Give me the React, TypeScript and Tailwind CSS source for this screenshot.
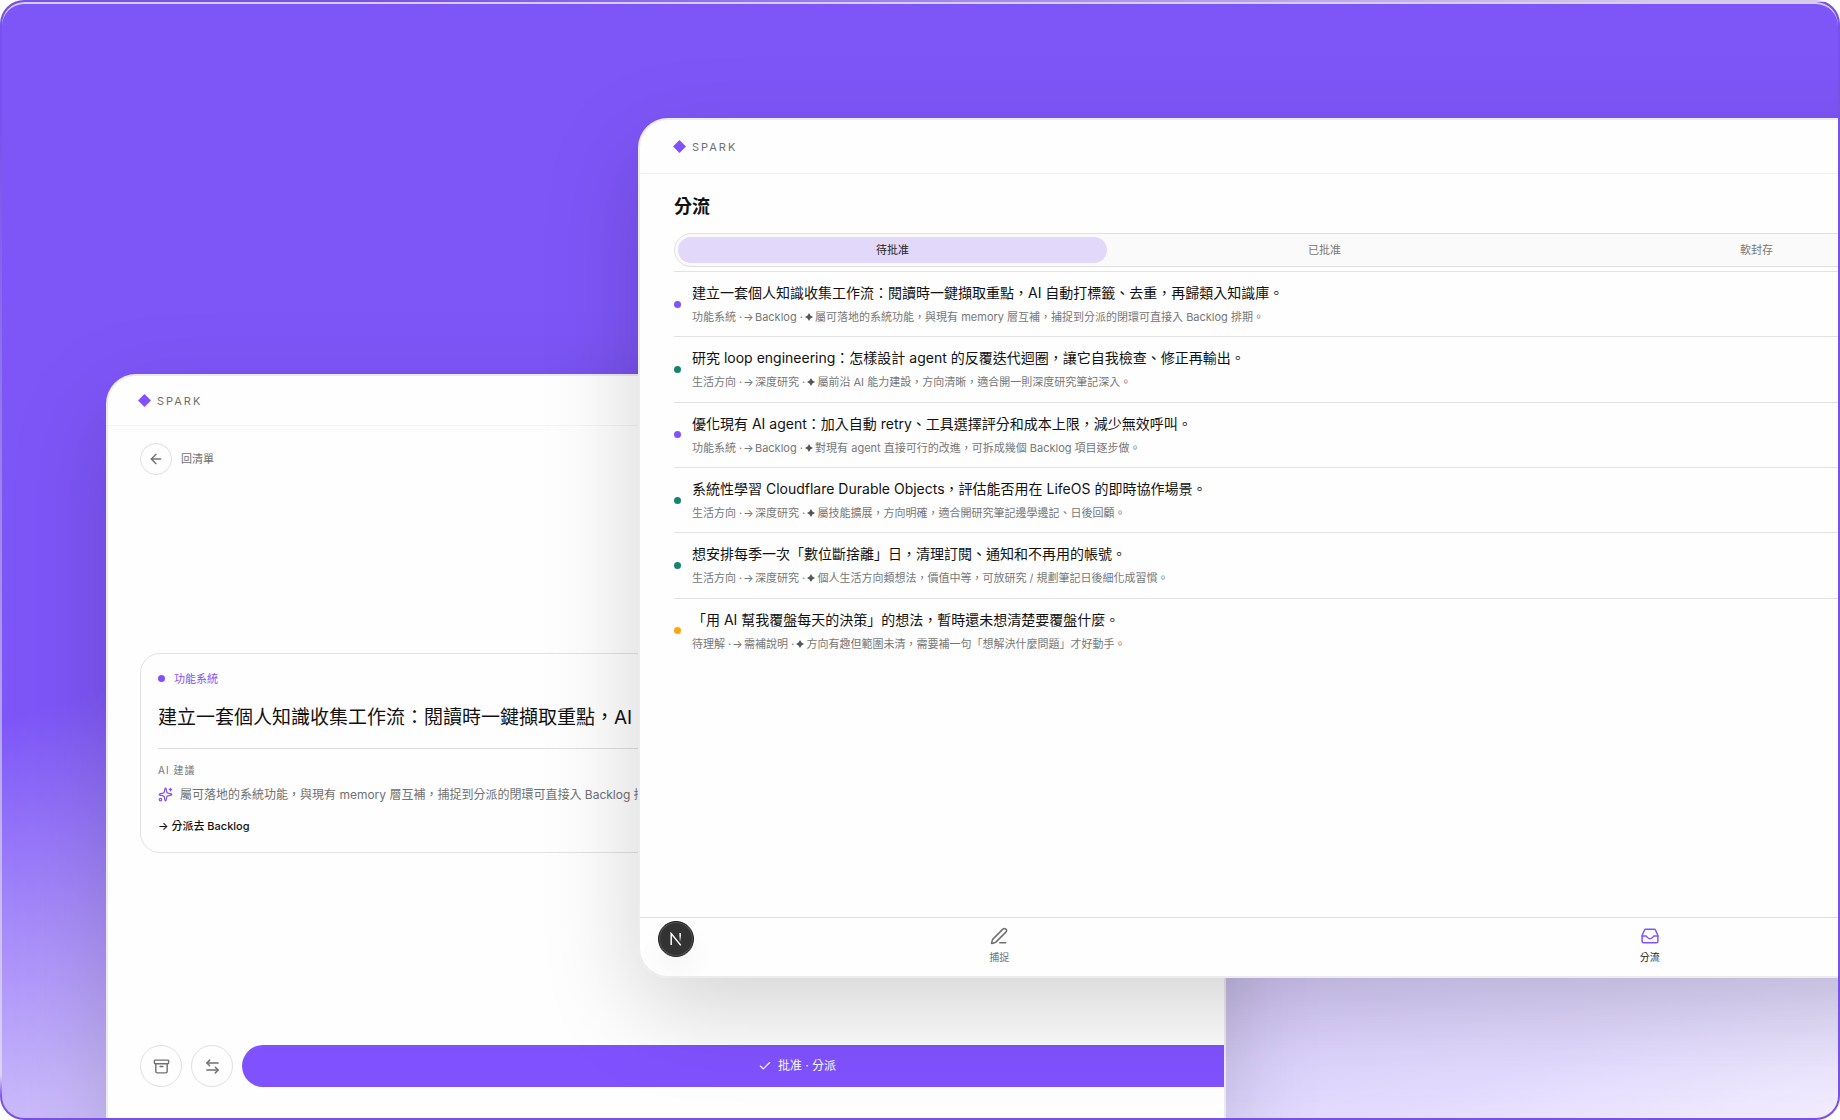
import React from "react";
import {
  Archive,
  ArrowLeft,
  ArrowLeftRight,
  Check,
  PenLine,
  Sparkles,
} from "lucide-react";

type Kind = "system" | "life" | "unclear";

interface Idea {
  kind: Kind;
  title: string;
  category: string;
  target: string;
  reason: string;
}

const dotColors: Record<Kind, string> = {
  system: "bg-[#8052ff]",
  life: "bg-[#15846e]",
  unclear: "bg-[#ffa60a]",
};

const ideas: Idea[] = [
  {
    kind: "system",
    title: "建立一套個人知識收集工作流：閱讀時一鍵擷取重點，AI 自動打標籤、去重，再歸類入知識庫。",
    category: "功能系統",
    target: "Backlog",
    reason: "屬可落地的系統功能，與現有 memory 層互補，捕捉到分派的閉環可直接入 Backlog 排期。",
  },
  {
    kind: "life",
    title: "研究 loop engineering：怎樣設計 agent 的反覆迭代迴圈，讓它自我檢查、修正再輸出。",
    category: "生活方向",
    target: "深度研究",
    reason: "屬前沿 AI 能力建設，方向清晰，適合開一則深度研究筆記深入。",
  },
  {
    kind: "system",
    title: "優化現有 AI agent：加入自動 retry、工具選擇評分和成本上限，減少無效呼叫。",
    category: "功能系統",
    target: "Backlog",
    reason: "對現有 agent 直接可行的改進，可拆成幾個 Backlog 項目逐步做。",
  },
  {
    kind: "life",
    title: "系統性學習 Cloudflare Durable Objects，評估能否用在 LifeOS 的即時協作場景。",
    category: "生活方向",
    target: "深度研究",
    reason: "屬技能擴展，方向明確，適合開研究筆記邊學邊記、日後回顧。",
  },
  {
    kind: "life",
    title: "想安排每季一次「數位斷捨離」日，清理訂閱、通知和不再用的帳號。",
    category: "生活方向",
    target: "深度研究",
    reason: "個人生活方向類想法，價值中等，可放研究 / 規劃筆記日後細化成習慣。",
  },
  {
    kind: "unclear",
    title: "「用 AI 幫我覆盤每天的決策」的想法，暫時還未想清楚要覆盤什麼。",
    category: "待理解",
    target: "需補說明",
    reason: "方向有趣但範圍未清，需要補一句「想解決什麼問題」才好動手。",
  },
];

const tabs = ["待批准", "已批准", "軟封存"];

function Brand() {
  return (
    <div className="flex items-center gap-1.5">
      <svg viewBox="0 0 13 13" className="size-[13px] fill-[#8052ff]" aria-hidden="true">
        <path d="M6.5 0 13 6.5 6.5 13 0 6.5Z" />
      </svg>
      <span className="text-[11px] leading-4 tracking-[2px] text-[#707070]">SPARK</span>
    </div>
  );
}

function Star() {
  return (
    <svg
      viewBox="0 0 8 8"
      className="-mx-px inline size-2 align-baseline fill-[#555]"
      aria-hidden="true"
    >
      <path d="M4 0 5.4 2.6 8 4 5.4 5.4 4 8 2.6 5.4 0 4 2.6 2.6Z" />
    </svg>
  );
}

function Arrow() {
  return <span className="-mx-0.5 inline-block">→</span>;
}

function InboxIcon() {
  return (
    <svg
      viewBox="0 0 18 18"
      className="size-[18px] fill-none stroke-[#8052ff]"
      strokeWidth="1.5"
      strokeLinecap="round"
      strokeLinejoin="round"
      aria-hidden="true"
    >
      <path d="M4.9 2.2h8.2a1.6 1.6 0 0 1 1.5 1l2.3 5.3v5.7a1.6 1.6 0 0 1-1.6 1.6H2.7a1.6 1.6 0 0 1-1.6-1.6V8.5l2.3-5.3a1.6 1.6 0 0 1 1.5-1Z" />
      <path d="M1.1 9h3.7c1.1 0 1.4 2.7 4.2 2.7S12.1 9 13.2 9h3.7" />
    </svg>
  );
}

function IdeaRow({ idea }: { idea: Idea }) {
  return (
    <li className="flex items-center gap-[11px] border-t border-[#e2e2e2] whitespace-nowrap">
      <span className={`size-[7px] shrink-0 rounded-full ${dotColors[idea.kind]}`} />
      <div className="pt-0.5">
        <p className="text-[14px] leading-6 text-[#111]">{idea.title}</p>
        <p className="text-[11px] leading-6 text-[#777]">
          {idea.category} · <Arrow /> {idea.target} · <Star /> {idea.reason}
        </p>
      </div>
    </li>
  );
}

function TriageWindow() {
  return (
    <section className="absolute top-[116px] -right-[173px] bottom-[140px] left-[636px] flex flex-col overflow-hidden rounded-[30px] border-2 border-[#ececec] bg-[#fefefe]">
      <header className="flex h-[54px] shrink-0 items-center border-b border-[#f0f0f0] px-[33px]">
        <Brand />
      </header>
      <main className="flex-1 px-[34px] pt-[17px]">
        <h1 className="text-[18px] leading-8 font-bold text-[#111]">分流</h1>
        <div
          role="tablist"
          className="mt-2.5 flex gap-[3px] rounded-full border border-[#e0e0e0] bg-[#fafafa] p-[3px]"
        >
          {tabs.map((tab, i) => (
            <button
              key={tab}
              role="tab"
              aria-selected={i === 0}
              className={
                i === 0
                  ? "h-[26px] flex-1 rounded-full bg-[#e1d8fa] text-[11px] text-[#222]"
                  : "h-[26px] flex-1 rounded-full text-[11px] text-[#777]"
              }
            >
              {tab}
            </button>
          ))}
        </div>
        <ul className="mt-1 grid min-h-[392px] auto-rows-fr">
          {ideas.map((idea) => (
            <IdeaRow key={idea.title} idea={idea} />
          ))}
        </ul>
      </main>
      <nav className="grid grid-cols-2 border-t border-[#dedede] px-[34px] pt-[9px] pb-[11px]">
        <a href="#capture" className="flex flex-col items-center gap-1 text-[#707070]">
          <PenLine size={18} strokeWidth={2} />
          <span className="text-[10px] leading-4">捕捉</span>
        </a>
        <a href="#triage" className="flex flex-col items-center gap-1 text-[#222]">
          <InboxIcon />
          <span className="text-[10px] leading-4">分流</span>
        </a>
      </nav>
      <button
        aria-label="N"
        className="absolute bottom-[19px] left-[18px] flex size-9 items-center justify-center rounded-full border border-[#222] bg-[#333] shadow-[inset_0_0_0_1px_#555,0_16px_32px_-8px_rgba(0,0,0,0.14)]"
      >
        <svg viewBox="0 0 12 14" className="h-[14px] w-3 fill-none" aria-hidden="true">
          <defs>
            <linearGradient id="stem" x1="0" y1="0" x2="0" y2="1">
              <stop offset="0.3" stopColor="#fff" />
              <stop offset="1" stopColor="#fff" stopOpacity="0" />
            </linearGradient>
          </defs>
          <path d="M1.2 13V1.6L10.8 13.4" stroke="#fff" strokeWidth="1.5" />
          <rect x="9.4" y="1" width="1.5" height="9" fill="url(#stem)" />
        </svg>
      </button>
    </section>
  );
}

function DetailWindow() {
  return (
    <section className="absolute top-[372px] bottom-0 left-[104px] w-[1120px] overflow-hidden rounded-tl-[30px] border-2 border-b-0 border-[#ebebeb] bg-[#fefefe] shadow-[0_32px_96px_rgba(0,0,0,0.17)]">
      <div className="flex h-full w-[1276px] flex-col">
        <header className="flex h-[50px] shrink-0 items-center border-b border-[#f3f3f3] px-[30px]">
          <Brand />
        </header>
        <main className="flex flex-1 flex-col px-8 pt-[17px] pb-[31px]">
          <a href="#list" className="flex items-center gap-[9px] text-[11px] text-[#707070]">
            <span className="flex size-8 items-center justify-center rounded-full border border-[#e0e0e0]">
              <ArrowLeft size={16} strokeWidth={2} />
            </span>
            回清單
          </a>
          <div className="flex flex-1 flex-col justify-center pb-[15px]">
            <article className="rounded-[20px] border border-[#e2e2e2] px-[17px] pt-[15px] pb-4 whitespace-nowrap">
              <p className="flex items-center gap-[9px] text-[11px] leading-5 text-[#8052ff]">
                <span className="size-[7px] rounded-full bg-[#8052ff]" />
                功能系統
              </p>
              <h2 className="mt-[13px] border-b border-[#dedede] pb-3.5 text-[19px] leading-8 text-[#111]">
                建立一套個人知識收集工作流：閱讀時一鍵擷取重點，AI 自動打標籤、去重，再歸類入知識庫。
              </h2>
              <p className="mt-[13px] text-[10px] leading-4 tracking-[1px] text-[#777]">AI 建議</p>
              <p className="mt-[7px] flex items-center gap-[7px] text-[12px] leading-5 text-[#707070]">
                <Sparkles size={15} strokeWidth={2} className="text-[#8052ff]" />
                屬可落地的系統功能，與現有 memory 層互補，捕捉到分派的閉環可直接入 Backlog 排期。
              </p>
              <p className="mt-[11px] text-[11px] leading-5 font-medium text-[#111]">
                → 分派去 Backlog
              </p>
            </article>
          </div>
          <div className="flex gap-[9px]">
            <button
              aria-label="封存"
              className="flex size-[42px] shrink-0 items-center justify-center rounded-full border border-[#e0e0e0] text-[#707070]"
            >
              <Archive size={17} strokeWidth={2} />
            </button>
            <button
              aria-label="改派"
              className="flex size-[42px] shrink-0 items-center justify-center rounded-full border border-[#e0e0e0] text-[#707070]"
            >
              <ArrowLeftRight size={17} strokeWidth={2} />
            </button>
            <button className="flex h-[42px] flex-1 items-center justify-center gap-1.5 rounded-full bg-[#8052ff] text-[12px] text-white">
              <Check size={14} strokeWidth={2} />
              批准 · 分派
            </button>
          </div>
        </main>
      </div>
    </section>
  );
}

export default function App() {
  return (
    <div className="min-h-screen bg-white font-['Inter','Noto_Sans_CJK_TC',sans-serif]">
      {/* thin frame: lighter along the left edge and the far end of the top edge */}
      <div className="h-screen min-h-[900px] rounded-[24px] p-0.5 [background:linear-gradient(to_bottom,#7850ea_10%,#b0a0e8_62%,#ddd4f2_96%,#7850ea_98%)_0_0/2px_100%_no-repeat,linear-gradient(to_right,#7850ea_20%,#d4c8e8_90%)_0_0/100%_2px_no-repeat,#7850ea]">
        <div className="relative h-full overflow-hidden rounded-[22px] bg-[linear-gradient(162deg,#7e56f8_42%,#c9b9fb_65%,#e3dbff_91%,#f1ecff_100%)]">
          <div className="pointer-events-none absolute inset-0 rounded-[22px] shadow-[inset_0_2px_0_rgba(255,255,255,0.7)]" />
          <DetailWindow />
          {/* the front window casts its shadow over the detail window */}
          <div className="pointer-events-none absolute top-[116px] -right-[173px] bottom-[140px] left-[636px] rounded-[30px] shadow-[0_32px_96px_rgba(0,0,0,0.17)]" />
          <TriageWindow />
        </div>
      </div>
    </div>
  );
}
